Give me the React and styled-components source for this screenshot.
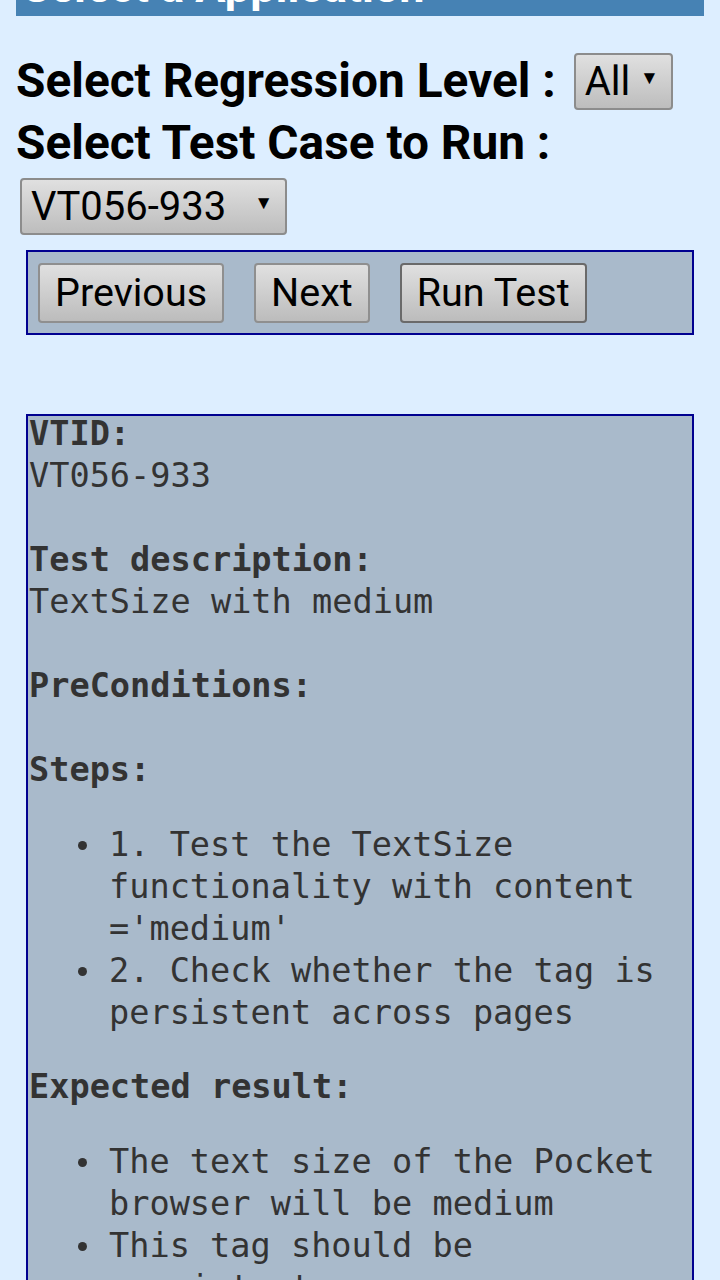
import styled, { createGlobalStyle } from "styled-components";

const GlobalStyle = createGlobalStyle`
  html, body {
    margin: 0;
    padding: 0;
    background: #ddeeff;
  }
  body {
    font-family: Roboto, "Liberation Sans", sans-serif;
    overflow: hidden;
  }
`;

const Page = styled.div`
  padding: 0 16px;
  height: 1280px;
  overflow: hidden;
`;

const Header = styled.div`
  margin-top: -46px;
  height: 62px;
  line-height: 66px;
  background: #4682b4;
  color: #ffffff;
  font-size: 45px;
  font-weight: bold;
  padding-left: 6px;
  white-space: nowrap;
  overflow: hidden;
`;

const Picker = styled.div`
  margin-top: 34px;
`;

const Label = styled.div`
  display: flex;
  align-items: center;
  height: 62px;
  font-size: 47.8px;
  font-weight: bold;
  color: #000;
  white-space: nowrap;
`;

const SelectBox = styled.div`
  display: inline-flex;
  align-items: center;
  justify-content: space-between;
  box-sizing: border-box;
  width: ${(p) => p.$width}px;
  height: 57px;
  margin-left: ${(p) => p.$offset || 0}px;
  padding: 0 12px 0 9px;
  border: 2px solid #8c8c8c;
  border-radius: 4px;
  background: linear-gradient(#e0e0e0, #bdbdbd);
  font-size: 40px;
  font-weight: normal;
  color: #000;
`;

const Arrow = styled.span`
  font-size: 19px;
  margin-top: -8px;
`;

const SelectRow = styled.div`
  margin: 4px 0 0 4px;
`;

const Panel = styled.div`
  margin: 0 10px;
  border: 2px solid #000090;
  background: #a9bacb;
`;

const ButtonBar = styled(Panel)`
  margin-top: 15px;
  display: flex;
  gap: 30px;
  padding: 11px 10px 10px;
`;

const Button = styled.button`
  box-sizing: border-box;
  height: 60px;
  padding: 0 15px;
  border: 2px solid ${(p) => (p.$focus ? "#6a6a6a" : "#8f8f8f")};
  border-radius: 4px;
  background: linear-gradient(#e0e0e0, #bcbcbc);
  font-family: Roboto, "Liberation Sans", sans-serif;
  font-size: 39.5px;
  color: #000;
  line-height: 1;
`;

const Details = styled(Panel)`
  margin-top: 79px;
  padding: 0 0 0 1px;
  height: 900px;
  font-family: "DejaVu Sans Mono", "Liberation Mono", monospace;
  font-size: 33.6px;
  line-height: 42px;
  color: #333;
`;

const Inner = styled.div`
  margin-top: -3px;
`;

const Line = styled.div`
  min-height: 42px;
  font-weight: ${(p) => (p.$bold ? "bold" : "normal")};
`;

const List = styled.ul`
  margin: 33px 0 32px;
  padding-left: 80px;
  list-style: none;
`;

const Item = styled.li`
  position: relative;

  &::before {
    content: "";
    position: absolute;
    left: -31px;
    top: 17px;
    width: 9px;
    height: 9px;
    border-radius: 50%;
    background: #333;
  }
`;

export default function App() {
  return (
    <>
      <GlobalStyle />
      <Page>
        <Header>Select a Application</Header>
        <Picker>
          <Label>
            Select Regression Level :
            <SelectBox $width={99} $offset={18}>
              All
              <Arrow>▼</Arrow>
            </SelectBox>
          </Label>
          <Label>Select Test Case to Run :</Label>
          <SelectRow>
            <SelectBox $width={267}>
              VT056-933
              <Arrow>▼</Arrow>
            </SelectBox>
          </SelectRow>
        </Picker>
        <ButtonBar>
          <Button>Previous</Button>
          <Button>Next</Button>
          <Button $focus>Run Test</Button>
        </ButtonBar>
        <Details>
          <Inner>
            <Line $bold>VTID:</Line>
            <Line>VT056-933</Line>
            <Line />
            <Line $bold>Test description:</Line>
            <Line>TextSize with medium</Line>
            <Line />
            <Line $bold>PreConditions:</Line>
            <Line />
            <Line $bold>Steps:</Line>
            <List>
              <Item>1. Test the TextSize functionality with content ='medium'</Item>
              <Item>2. Check whether the tag is persistent across pages</Item>
            </List>
            <Line $bold>Expected result:</Line>
            <List>
              <Item>The text size of the Pocket browser will be medium</Item>
              <Item>This tag should be persistent across pages</Item>
            </List>
          </Inner>
        </Details>
      </Page>
    </>
  );
}
